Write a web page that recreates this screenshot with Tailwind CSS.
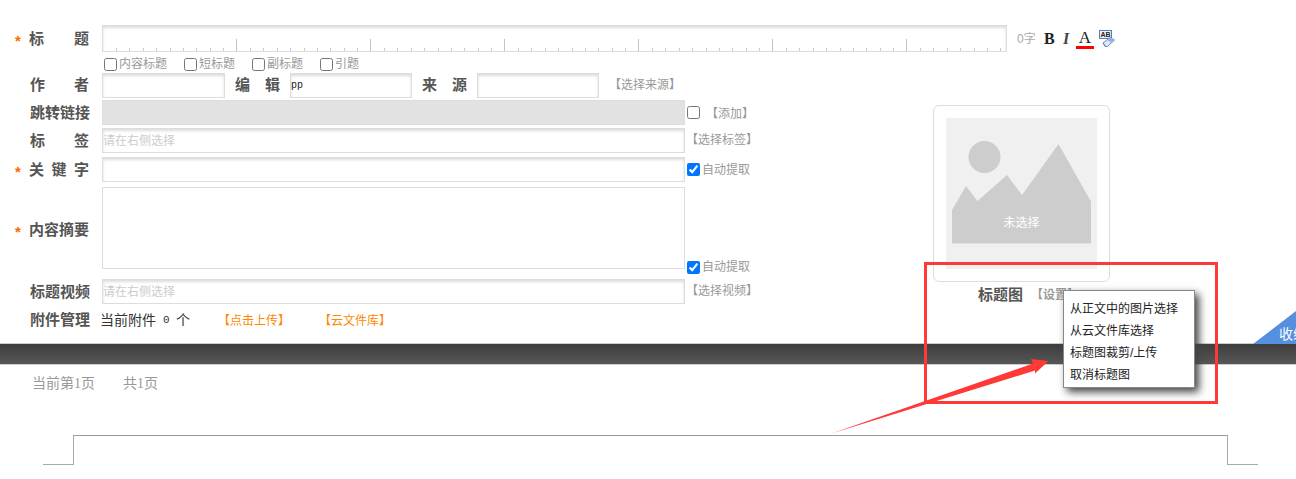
<!DOCTYPE html>
<html lang="zh-CN">
  <head>
    <meta charset="UTF-8" />
    <title>文章编辑</title>
    <script src="https://cdn.jsdelivr.net/npm/@tailwindcss/browser@4"></script>
  </head>
  <body class="bg-white">
    <div class="relative w-[1296px] h-[479px] overflow-hidden font-['Liberation_Sans','Noto_Sans_CJK_SC',sans-serif] text-[12px] text-[#999]">
      <!-- Form area -->
      <div class="h-[343px] pt-[25px]">
        <!-- Title row -->
        <div class="flex items-center h-[27px]">
          <div class="flex items-center w-[102px] pl-[15px]">
            <span class="w-[14px] text-[15px] leading-none mt-[3px] text-[#f60] font-bold">*</span>
            <span class="flex justify-between w-[60px] mt-[2px] text-[15px] font-bold text-[#555]"><i class="not-italic">标</i><i class="not-italic">题</i></span>
          </div>
          <div class="relative w-[905px] h-[27px] border border-[#ddd] shadow-[inset_0_2px_3px_#ddd]">
            <svg class="absolute left-0 bottom-0" width="903" height="12">
              <defs>
                <pattern id="ruler" x="0" y="0" width="134" height="12" patternUnits="userSpaceOnUse">
                  <path d="M133.500 0V12" stroke="#cbbccb" />
                  <path d="M13.500 9V12M26.500 9V12M40.500 9V12M53.500 9V12M67.500 9V12M80.500 9V12M93.500 9V12M107.500 9V12M120.500 9V12" stroke="#d9bddc" />
                </pattern>
              </defs>
              <rect width="903" height="12" fill="url(#ruler)" />
            </svg>
          </div>
          <span class="ml-[10px] w-[24px] text-[12px] text-[#aaa]">0字</span>
          <div class="flex items-center h-[27px] font-['Liberation_Serif',serif] text-[#222]">
            <span class="ml-[3px] w-[19px] text-[16px] font-bold">B</span>
            <span class="w-[13px] text-[16px] font-bold italic text-[#444]">I</span>
            <span class="relative flex justify-center w-[18px] h-[22px] text-[17px] leading-[19px]">A<i class="absolute left-0 bottom-[1px] w-[18px] h-[3px] bg-[#f00]"></i></span>
            <svg class="ml-[5px]" width="17" height="18" viewBox="0 0 17 18">
              <rect x="0.500" y="0.500" width="12" height="8" fill="#eef3fa" stroke="#5a7fae" />
              <text x="1.500" y="7" font-size="7" font-family="Liberation Sans" font-weight="bold" fill="#222">AB</text>
              <path d="M4 13 11 7.500l4.500 2.500-7 6.500H6z" fill="#dfe8f3" stroke="#5f8fc4" />
              <path d="M4 13l3 3.500" stroke="#5f8fc4" />
              <path d="M11 7.500l4.500 2.500-3 2.800-4.500-2.800z" fill="#8fb4df" />
            </svg>
          </div>
        </div>

        <div class="flex">
          <!-- Left fields -->
          <div class="w-[760px]">
            <div class="flex items-center h-[16px] mt-[4px] pl-[104px]">
              <label class="flex items-center w-[80px] gap-[2px]"><input type="checkbox" class="w-[13px] h-[13px]" />内容标题</label>
              <label class="flex items-center w-[68px] gap-[2px]"><input type="checkbox" class="w-[13px] h-[13px]" />短标题</label>
              <label class="flex items-center w-[68px] gap-[2px]"><input type="checkbox" class="w-[13px] h-[13px]" />副标题</label>
              <label class="flex items-center gap-[2px]"><input type="checkbox" class="w-[13px] h-[13px]" />引题</label>
            </div>

            <div class="flex items-center h-[25px] mt-[1px]">
              <span class="flex justify-between w-[59px] ml-[30px] mr-[13px] text-[15px] font-bold text-[#555]"><i class="not-italic">作</i><i class="not-italic">者</i></span>
              <input class="w-[123px] h-[25px] border border-[#ddd] shadow-[inset_0_2px_3px_#ddd]" />
              <span class="flex justify-between w-[45px] ml-[10px] mr-[10px] text-[15px] font-bold text-[#555]"><i class="not-italic">编</i><i class="not-italic">辑</i></span>
              <input value="pp" class="w-[122px] h-[25px] border border-[#ddd] shadow-[inset_0_2px_3px_#ddd] text-[10px] text-[#222] font-['Liberation_Mono',monospace]" />
              <span class="flex justify-between w-[45px] ml-[10px] mr-[10px] text-[15px] font-bold text-[#555]"><i class="not-italic">来</i><i class="not-italic">源</i></span>
              <input class="w-[122px] h-[25px] border border-[#ddd] shadow-[inset_0_2px_3px_#ddd]" />
              <span class="ml-[10px] -mt-[2px]">【选择来源】</span>
            </div>

            <div class="flex items-center h-[25px] mt-[2px]">
              <span class="w-[59px] ml-[30px] mr-[13px] mt-[2px] text-[15px] font-bold text-[#555] whitespace-nowrap">跳转链接</span>
              <input disabled class="w-[583px] h-[25px] bg-[#e2e2e2] border border-[#ddd]" />
              <input type="checkbox" class="w-[13px] h-[13px] ml-[2px]" />
              <span class="ml-[6px] mt-[2px]">【添加】</span>
            </div>

            <div class="flex items-center h-[25px] mt-[3px]">
              <span class="flex justify-between w-[59px] ml-[30px] mr-[13px] mt-[2px] text-[15px] font-bold text-[#555]"><i class="not-italic">标</i><i class="not-italic">签</i></span>
              <input placeholder="请在右侧选择" class="w-[583px] h-[25px] border border-[#ddd] shadow-[inset_0_2px_3px_#ddd] placeholder:text-[#ccc]" />
              <span class="ml-[1px] -mt-[2px]">【选择标签】</span>
            </div>

            <div class="flex items-center h-[25px] mt-[4px]">
              <span class="w-[14px] ml-[15px] text-[15px] leading-none mt-[3px] text-[#f60] font-bold">*</span>
              <span class="flex justify-between w-[60px] mr-[13px] mt-[2px] text-[15px] font-bold text-[#555]"><i class="not-italic">关</i><i class="not-italic">键</i><i class="not-italic">字</i></span>
              <input class="w-[583px] h-[25px] border border-[#ddd] shadow-[inset_0_2px_3px_#ddd]" />
              <input type="checkbox" checked class="w-[13px] h-[13px] ml-[2px]" />
              <span class="ml-[2px]">自动提取</span>
            </div>

            <div class="flex items-center h-[82px] mt-[5px]">
              <span class="w-[14px] ml-[15px] text-[15px] leading-none mt-[6px] text-[#f60] font-bold">*</span>
              <span class="w-[59px] mt-[4px] mr-[14px] text-[15px] font-bold text-[#555] whitespace-nowrap">内容摘要</span>
              <textarea class="w-[583px] h-[82px] border border-[#ddd] resize-none"></textarea>
              <label class="flex items-center self-end h-[16px] mb-[-6px] ml-[2px] gap-[2px]"><input type="checkbox" checked class="w-[13px] h-[13px]" />自动提取</label>
            </div>

            <div class="flex items-center h-[25px] mt-[10px]">
              <span class="w-[59px] ml-[30px] mr-[13px] mt-[2px] text-[15px] font-bold text-[#555] whitespace-nowrap">标题视频</span>
              <input placeholder="请在右侧选择" class="w-[583px] h-[25px] border border-[#ddd] shadow-[inset_0_2px_3px_#ddd] placeholder:text-[#ccc]" />
              <span class="ml-[1px] -mt-[2px]">【选择视频】</span>
            </div>

            <div class="flex items-center h-[20px] mt-[6px]">
              <span class="w-[59px] ml-[30px] mr-[11px] text-[15px] font-bold text-[#555] whitespace-nowrap">附件管理</span>
              <span class="flex items-center w-[118px] text-[14px] text-[#333] whitespace-nowrap">当前附件<span class="ml-[7px] w-[13px] font-['Liberation_Mono',monospace] text-[11px]">0</span>个</span>
              <span class="text-[#f80] mt-[1px]">【点击上传】</span>
              <span class="text-[#f80] mt-[1px] ml-[29px]">【云文件库】</span>
            </div>
          </div>

          <!-- Cover image -->
          <div class="ml-[173px] mt-[53px]">
            <div class="w-[177px] h-[177px] p-[12px] border border-[#ddd] rounded-[6px]">
              <div class="relative w-[151px] h-[151px] bg-[#f0f0f0]">
                <svg class="absolute left-0 top-0" width="151" height="151" viewBox="946 118 151 151">
                  <circle cx="984.500" cy="157" r="16" fill="#cdcdcd" />
                  <path d="M952 210 966 186 977.500 201 1007 175 1022 195 1058.500 144 1091 201.500V243.500H952z" fill="#cdcdcd" />
                </svg>
                <span class="absolute left-0 right-0 top-[96px] text-center text-white">未选择</span>
              </div>
            </div>
            <div class="flex items-center h-[20px] mt-[3px] ml-[45px] whitespace-nowrap">
              <span class="text-[15px] font-bold text-[#555]">标题图</span>
              <span class="ml-[8px] font-bold">【设置】</span>
            </div>
          </div>
        </div>
      </div>

      <!-- Dark divider -->
      <div class="h-[22px] border-y border-[#ccc] bg-gradient-to-b from-[#3e3e3e] to-[#575757]"></div>

      <!-- Pager -->
      <div class="flex h-[36px] items-center pl-[32px] gap-[28px] text-[14px] text-[#999] font-['Liberation_Serif','Noto_Sans_CJK_SC',serif]">
        <span>当前第1页</span>
        <span>共1页</span>
      </div>

      <!-- Paper outline -->
      <div class="flex items-end ml-[43px] mt-[34px] w-[1215px] h-[30px]">
        <div class="w-[30px] border-b border-[#aaa]"></div>
        <div class="w-[1155px] h-[30px] border-x border-t border-x-[#aaa] border-t-[#999]"></div>
        <div class="w-[30px] border-b border-[#aaa]"></div>
      </div>

      <!-- Collapse tab -->
      <div class="absolute right-0 top-[311px] w-[43px] h-[33px] overflow-hidden bg-[#5590e0] [clip-path:polygon(0_100%,100%_0,100%_100%)]">
        <span class="absolute left-[26px] top-[15px] text-[14px] leading-[16px] text-white whitespace-nowrap">收缩</span>
      </div>

      <!-- Popup menu -->
      <div class="absolute left-[1063px] top-[290px] w-[132px] h-[98px] py-[7px] pl-[6px] bg-white border border-[#888] shadow-[4px_4px_8px_#444] text-[12px] leading-[22px] text-[#222]">
        <div>从正文中的图片选择</div>
        <div>从云文件库选择</div>
        <div>标题图裁剪/上传</div>
        <div>取消标题图</div>
      </div>

      <!-- Screenshot annotation -->
      <div class="absolute left-[924px] top-[262px] w-[294px] h-[142px] border-[3px] border-[#ff3838]"></div>
      <svg class="absolute left-0 top-0 pointer-events-none" width="1296" height="479">
        <path d="M831.500 433.500 1033 363.500 1031 359 1048.500 361 1035 373.500 1035 370.500z" fill="#ff3838" />
      </svg>
    </div>
  </body>
</html>
